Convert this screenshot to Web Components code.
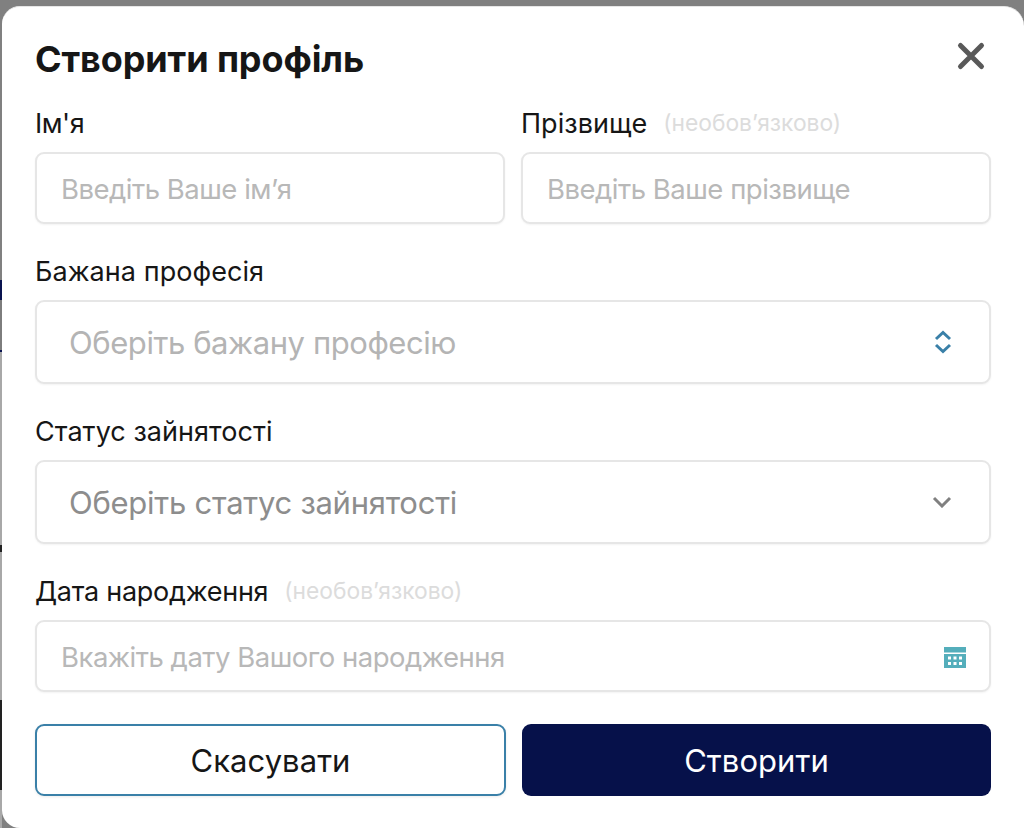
<!DOCTYPE html>
<html lang="uk"><head><meta charset="utf-8"><title>Створити профіль</title>
<style>
html,body{margin:0;padding:0;height:828px;overflow:hidden;background:#808080}
body{font-family:Inter,"Noto Sans",sans-serif}
</style></head><body>
<profile-dialog>
  <form-field slot="a" label="Ім'я" style="--ls:-.5px"><text-box placeholder="Введіть Ваше ім’я"></text-box></form-field>
  <form-field slot="b" label="Прізвище" note="(необов’язково)"><text-box placeholder="Введіть Ваше прізвище"></text-box></form-field>
  <form-field label="Бажана професія"><select-box placeholder="Оберіть бажану професію" icon="updown"></select-box></form-field>
  <form-field label="Статус зайнятості"><select-box placeholder="Оберіть статус зайнятості" icon="down"></select-box></form-field>
  <form-field label="Дата народження" note="(необов’язково)" style="--ls:-.27px"><text-box placeholder="Вкажіть дату Вашого народження" calendar></text-box></form-field>
  <action-button slot="cancel" kind="outline">Скасувати</action-button>
  <action-button slot="ok" kind="solid">Створити</action-button>
</profile-dialog>
<script>
function def(name, html){
  customElements.define(name, class extends HTMLElement{
    connectedCallback(){
      if(this.shadowRoot) return;
      const r=this.attachShadow({mode:'open'});
      r.innerHTML=html(this);
    }
  });
}
def('profile-dialog',()=>`<style>
:host{display:block;box-sizing:border-box;height:828px;padding:6px 0 0 2px;
 background:linear-gradient(to bottom,#808080 0 280px,#0a1450 280px 300px,#7d7d7d 300px 350px,#0a1450 350px 352px,#a8a8a8 352px 545px,#222 545px 552px,#a8a8a8 552px 700px,#222 700px 790px,#a8a8a8 790px) left top/2px 100% no-repeat,#808080}
.m{box-sizing:border-box;height:822px;background:#fff;border-radius:18px 20px 0 18px;border-top:1px solid #e6e6e6;padding:33px 33px 32px;display:flex;flex-direction:column}
.h{display:flex;justify-content:space-between;align-items:center;height:40px;margin-bottom:29px}
h1{margin:-1px 0 1px;font:700 36px/40px Inter,sans-serif;color:#161616;letter-spacing:-.1px}
svg{display:block;margin-right:5px;margin-top:-8px}
.row{display:grid;grid-template-columns:470px 470px;gap:16px}
.acts{grid-template-columns:471px 469px}
.stack{display:flex;flex-direction:column;gap:33px}
.acts{margin-top:32px}
</style><div class="m"><div class="h"><h1>Створити профіль</h1>
<svg width="30" height="30" viewBox="0 0 30 30"><path d="M4.500 4.500 25.500 25.500M25.500 4.500 4.500 25.500" stroke="#595959" stroke-width="5" stroke-linecap="round"/></svg></div>
<div class="stack"><div class="row"><slot name="a"></slot><slot name="b"></slot></div><slot></slot></div>
<div class="row acts"><slot name="cancel"></slot><slot name="ok"></slot></div></div>`);
def('form-field',h=>`<style>
:host{display:block}
.l{display:flex;align-items:center;height:28px;margin-bottom:15px;font:400 27px/28px Inter,sans-serif;color:#161616;white-space:nowrap}
.l span:first-child{letter-spacing:var(--ls,.05px);padding-top:1px}
.n{margin-left:16px;font-size:22.8px;color:#dcdcdc}
</style><div class="l"><span>${h.getAttribute('label')}</span>${h.hasAttribute('note')?`<span class="n">${h.getAttribute('note')}</span>`:''}</div><slot></slot>`);
def('text-box',h=>`<style>
:host{display:flex;align-items:center;justify-content:space-between;box-sizing:border-box;height:72px;border:2px solid #e6e6e6;border-radius:9px;padding:0 23px 0 24px;background:#fff;box-shadow:0 1px 2px rgba(0,0,0,.05);font:400 27.5px/32px Inter,sans-serif;letter-spacing:-.5px;color:#b8b8b8;white-space:nowrap}
span{padding-top:2px}
svg{display:block;margin-top:3px}
</style><span>${h.getAttribute('placeholder')}</span>${h.hasAttribute('calendar')?`<svg width="22" height="22" viewBox="0 0 22 22" fill="#54aebb"><rect x="0" y="0" width="22" height="5.500"/><path fill-rule="evenodd" d="M0 7h22v14H0zM4 9.500h3v3H4zM9.500 9.500h3v3h-3zM15 9.500h3v3h-3zM4 15h3v3H4zM9.500 15h3v3h-3zM15 15h3v3h-3z"/></svg>`:''}`);
def('select-box',h=>`<style>
:host{display:flex;align-items:center;justify-content:space-between;box-sizing:border-box;height:84px;border:2px solid #e6e6e6;border-radius:9px;padding:0 37px 0 32px;background:#fff;box-shadow:0 1px 2px rgba(0,0,0,.05);font:400 31px/36px Inter,sans-serif;letter-spacing:-.26px;color:#8d8d8d;white-space:nowrap}
:host([icon=updown]){color:#b4b4b4;letter-spacing:-.43px}
svg{display:block}
span{padding-top:1px}
</style><span>${h.getAttribute('placeholder')}</span>${h.getAttribute('icon')==='updown'
?`<svg width="18" height="24" viewBox="0 0 18 24" fill="none" stroke="#3a80a8" stroke-width="3"><path d="M2 9 9 2.500 16 9M2 15 9 21.500 16 15"/></svg>`
:`<svg width="20" height="12" viewBox="0 0 20 12" fill="none" stroke="#808080" stroke-width="3"><path d="M2 2 10 10 18 2"/></svg>`}`);
def('action-button',h=>`<style>
:host{display:flex;align-items:center;justify-content:center;box-sizing:border-box;height:72px;border-radius:9px;padding-top:2px;font:400 31px/36px Inter,sans-serif;letter-spacing:.05px;white-space:nowrap}
:host([kind=outline]){border:2px solid #3a80a8;color:#161616;background:#fff;box-shadow:0 1px 3px rgba(0,0,0,.08)}
:host([kind=solid]){background:#06114a;color:#fff}
</style><slot></slot>`);
</script></body></html>
